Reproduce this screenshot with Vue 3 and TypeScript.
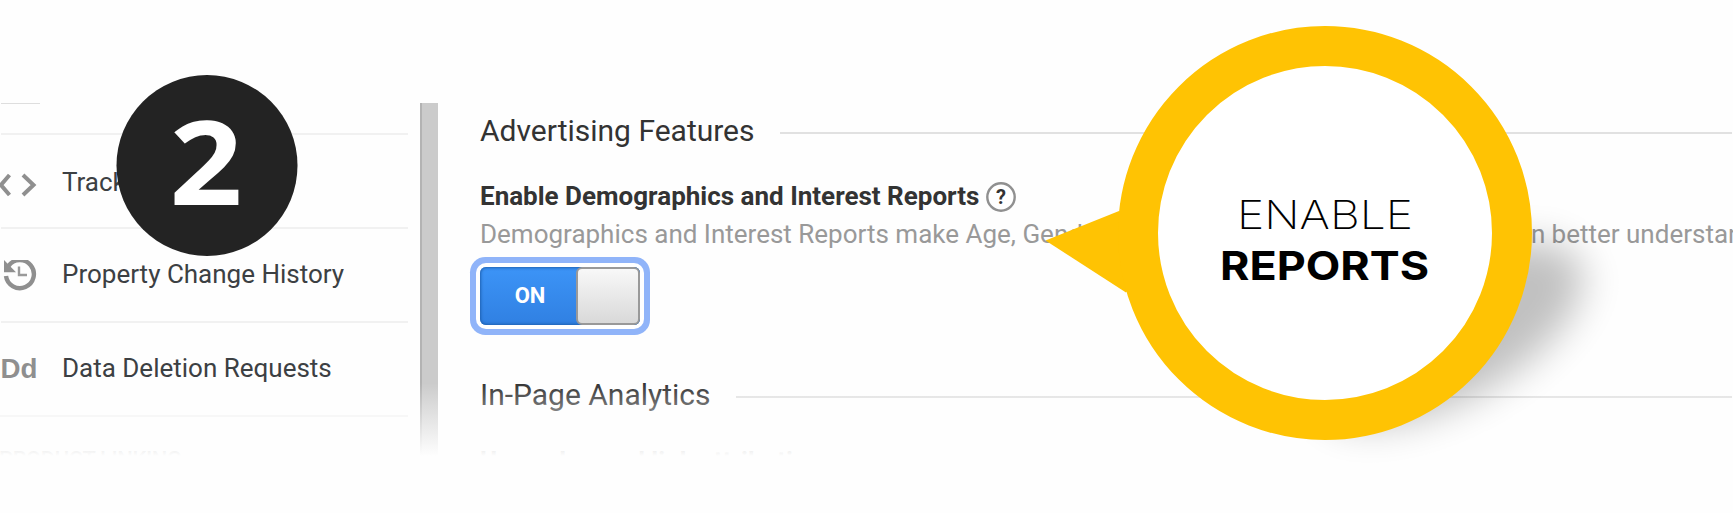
<script setup lang="ts">
interface MenuItem {
  icon: 'code' | 'history' | 'data'
  label: string
}

const items: MenuItem[] = [
  { icon: 'code', label: 'Tracking Info' },
  { icon: 'history', label: 'Property Change History' },
  { icon: 'data', label: 'Data Deletion Requests' },
]
</script>

<template>
  <main class="stage">
    <section class="panel">
      <nav class="sidebar">
        <div class="stub"></div>
        <div v-for="item in items" :key="item.label" class="item" :class="item.icon">
          <svg v-if="item.icon === 'code'" class="icon" viewBox="0 0 40 36">
            <path d="M9.5 9 L1 19 L9.5 29 M23 9 L33.5 19 L23 29" fill="none" stroke="#8f8f8f" stroke-width="4" />
          </svg>
          <svg v-else-if="item.icon === 'history'" class="icon" viewBox="0 0 40 36">
            <path d="M8.5 6 A14 14 0 1 1 6 16" fill="none" stroke="#8f8f8f" stroke-width="4.4" />
            <path d="M4 0 V12.2 H16 Z" fill="#8f8f8f" />
            <path d="M19 6.5 V15 H27" fill="none" stroke="#9a9a9a" stroke-width="2.4" />
          </svg>
          <svg v-else class="icon" viewBox="0 0 40 36">
            <text class="dd" x="0.5" y="23.5" textLength="37" lengthAdjust="spacingAndGlyphs">Dd</text>
          </svg>
          <span>{{ item.label }}</span>
        </div>
        <div class="section">PRODUCT LINKING</div>
      </nav>
      <div class="divider"></div>
      <div class="content">
        <h2 class="heading"><span>Advertising Features</span></h2>
        <div class="setting">
          <strong>Enable Demographics and Interest Reports</strong>
          <svg class="help" viewBox="0 0 30 30">
            <circle cx="15" cy="15" r="13.7" fill="#fff" stroke="#909090" stroke-width="2.4" />
            <text x="15" y="22" text-anchor="middle">?</text>
          </svg>
        </div>
        <p class="description">
          Demographics and Interest Reports make Age, Gender, <span class="tail">and Interest data available so you can</span> better understand who your users are.
        </p>
        <div class="toggle">
          <span class="on">ON</span>
          <span class="knob"></span>
        </div>
        <h2 class="heading second"><span>In-Page Analytics</span></h2>
        <strong class="next">Use enhanced link attribution</strong>
      </div>
      <div class="fade"></div>
    </section>

    <svg class="overlay" viewBox="0 0 1733 513">
      <defs>
        <filter id="soft" x="-40%" y="-70%" width="180%" height="240%">
          <feGaussianBlur stdDeviation="19" />
        </filter>
      </defs>
      <circle cx="207" cy="165.5" r="90.5" fill="#232323" />
      <text class="step" x="169.5" y="205" textLength="73" lengthAdjust="spacingAndGlyphs">2</text>
      <ellipse cx="1450" cy="334" rx="148" ry="66" transform="rotate(-29 1450 334)" fill="#000" opacity=".24" filter="url(#soft)" />
      <path d="M1045.5 240.5 L1119 211 L1180 240 L1126 292.5 Z" fill="#ffc303" />
      <circle cx="1325" cy="233" r="187" fill="#fff" stroke="#ffc303" stroke-width="40" />
      <text class="light" x="1237" y="229" textLength="176" lengthAdjust="spacingAndGlyphs">ENABLE</text>
      <text class="bold" x="1220" y="280" textLength="209" lengthAdjust="spacingAndGlyphs">REPORTS</text>
    </svg>
  </main>
</template>

<style>
html, body {
  background: #fefefe;
  overflow: hidden;
}
</style>

<style scoped>
.stage {
  position: relative;
  box-sizing: border-box;
  width: 1733px;
  height: 513px;
  padding-top: 103px;
  overflow: hidden;
  font-family: Roboto, "Liberation Sans", sans-serif;
}
.panel {
  position: relative;
  display: flex;
  height: 353px;
  overflow: hidden;
}
.sidebar {
  flex: none;
  width: 407px;
  padding-left: 1px;
  margin-right: 12px;
  color: #3c4043;
}
.stub {
  width: 39px;
  height: 29px;
  border-top: 1px solid #dedede;
}
.item {
  display: flex;
  align-items: center;
  box-sizing: border-box;
  height: 94px;
  border-top: 2px solid #f1f1f1;
  font-size: 26px;
}
.item span {
  margin-top: -3px;
}
.item.code span {
  margin-top: 1px;
}
.icon {
  flex: none;
  width: 40px;
  height: 36px;
  margin: 5px 22px 0 -1px;
}
.dd {
  font: bold 27px "Liberation Sans", sans-serif;
  fill: #8f8f8f;
}
.section {
  padding-top: 30px;
  border-top: 2px solid #f1f1f1;
  margin-left: -2px;
  font-size: 22px;
  font-weight: 500;
  line-height: 26px;
  letter-spacing: -0.4px;
  color: #555;
}
.divider {
  flex: none;
  box-sizing: border-box;
  width: 18px;
  border-left: 2px solid #b3b3b3;
  background: #cbcbcb;
}
.content {
  flex: 1;
  min-width: 0;
  padding-left: 42px;
  color: #333;
}
.heading {
  display: flex;
  align-items: center;
  gap: 25px;
  height: 36px;
  margin: 12px 1px 0 0;
  font-size: 30px;
  font-weight: 400;
  line-height: 36px;
}
.heading span {
  margin-top: -4px;
}
.heading::after {
  content: "";
  flex: 1;
  height: 2px;
  background: #e1e1e1;
}
.setting {
  display: flex;
  align-items: center;
  gap: 7px;
  height: 32px;
  margin-top: 29px;
  font-size: 26px;
}
.help {
  width: 30px;
  height: 30px;
  margin-top: 2px;
}
.help text {
  font: bold 20px Roboto, sans-serif;
  fill: #333;
}
.description {
  margin: 6px 0 0;
  font-size: 26px;
  line-height: 32px;
  white-space: nowrap;
  color: #999;
}
.tail {
  letter-spacing: -0.14px;
}
.toggle {
  display: flex;
  box-sizing: border-box;
  width: 160px;
  height: 58px;
  margin-top: 17px;
  border-radius: 6px;
  background: linear-gradient(#3c94f7, #3080e2);
  box-shadow: inset 0 0 3px 1px #1e60b0, 0 0 0 4px #fff, 0 0 0 10px #90b4f9;
}
.on {
  width: 96px;
  padding-left: 4px;
  box-sizing: border-box;
  color: #fff;
  font-size: 22px;
  font-weight: 700;
  line-height: 57px;
  text-align: center;
}
.knob {
  width: 64px;
  box-sizing: border-box;
  border: 2px solid #999;
  border-radius: 6px;
  background: linear-gradient(#f8f8f8, #d9d9d9);
}
.second {
  margin-top: 54px;
}
.next {
  display: block;
  margin-top: 30px;
  font-size: 26px;
  line-height: 32px;
}
.fade {
  position: absolute;
  inset: 280px 0 0;
  background: linear-gradient(rgba(254, 254, 254, 0), #fefefe);
}
.overlay {
  position: absolute;
  inset: 0;
  width: 1733px;
  height: 513px;
}
.step {
  font: 700 117px "Open Sans", sans-serif;
  fill: #fff;
}
.light {
  font: 200 40px Inter, sans-serif;
}
.bold {
  font: 700 40px Inter, sans-serif;
}
</style>
